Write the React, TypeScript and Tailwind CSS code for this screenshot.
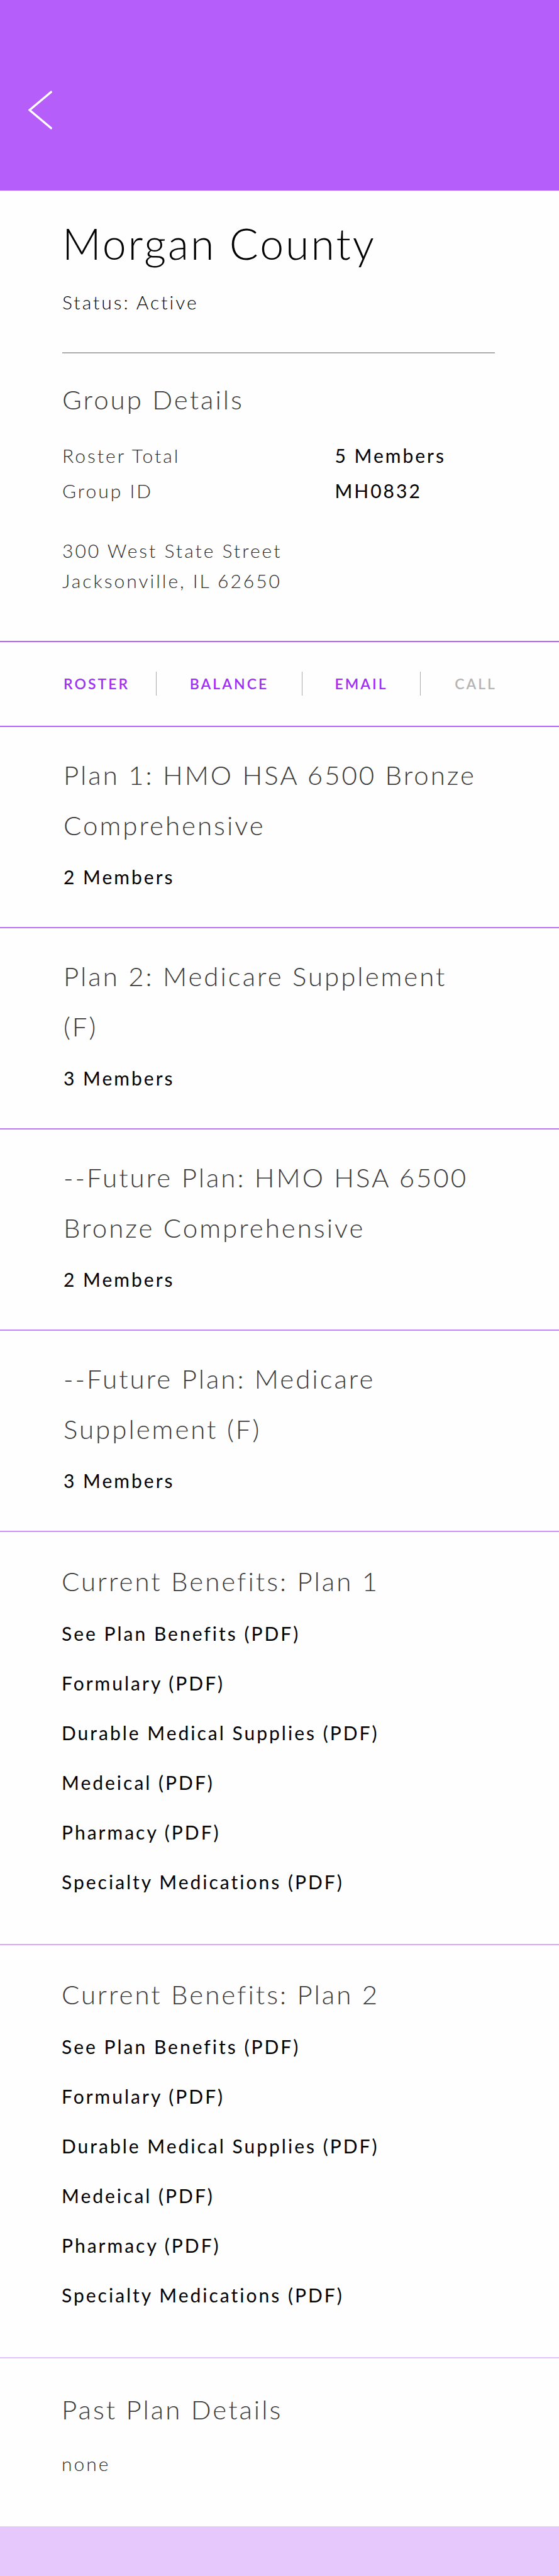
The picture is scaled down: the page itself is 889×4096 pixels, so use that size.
const plans = [
  { name: "Plan 1: HMO HSA 6500 Bronze Comprehensive", members: "2 Members", line: "border-[#bb70fa]" },
  { name: "Plan 2: Medicare Supplement (F)", members: "3 Members", line: "border-[#bd78fa]" },
  { name: "--Future Plan: HMO HSA 6500 Bronze Comprehensive", members: "2 Members", line: "border-[#c384fc]" },
  { name: "--Future Plan: Medicare Supplement (F)", members: "3 Members", line: "border-[#ca90fc]" },
];

const documents = [
  "See Plan Benefits (PDF)",
  "Formulary (PDF)",
  "Durable Medical Supplies (PDF)",
  "Medeical (PDF)",
  "Pharmacy (PDF)",
  "Specialty Medications (PDF)",
];

const benefits = [
  { name: "Current Benefits: Plan 1", line: "border-[#d9a8fd]" },
  { name: "Current Benefits: Plan 2", line: "border-[#e2c0fd]" },
];

const heading = "text-[42px] leading-[80px] font-light text-[#3a3a3a]";

export default function App() {
  return (
    <div className="flex min-h-screen flex-col bg-[#fefefe] font-['Lato',sans-serif] text-[30px] tracking-widest text-black">
      <header className="bg-[#b55efa] pt-[144px] pb-[97px] pl-[45px]">
        <button type="button" aria-label="Back" className="block">
          <svg width="38" height="62" viewBox="0 0 64 104" fill="none" className="block">
            <path d="M63 2 L3.500 52 L63 102" stroke="#fff" strokeWidth="5.500" />
          </svg>
        </button>
      </header>

      <main>
        <section className="border-b-2 border-[#b464fa] pt-[44px] pr-[102px] pb-[72px] pl-[99px]">
          <h1 className="text-[68px] leading-[80px] font-light">Morgan County</h1>
          <p className="mt-[33px] leading-[40px] font-light">Status: Active</p>
          <hr className="mt-[60px] border-t-2 border-[#ababab]" />
          <h2 className={`mt-[33px] ${heading}`}>Group Details</h2>
          <dl className="mt-[21px] grid grid-cols-[63fr_37fr] leading-[56px]">
            <dt className="font-light text-[#2b2b2b]">Roster Total</dt>
            <dd>5 Members</dd>
            <dt className="font-light text-[#2b2b2b]">Group ID</dt>
            <dd>MH0832</dd>
          </dl>
          <address className="mt-[43px] leading-[48px] font-light text-[#2b2b2b] not-italic">
            300 West State Street
            <br />
            Jacksonville, IL 62650
          </address>
        </section>

        <nav className="grid grid-cols-[147fr_232fr_188fr_122fr] border-b-2 border-[#b464fa] pt-[47px] pr-[99px] pb-[48px] pl-[101px] text-[23px] leading-[32px] font-semibold text-[#9f2ff5]">
          <button type="button" className="h-[38px] text-left">ROSTER</button>
          <button type="button" className="h-[38px] border-l border-[#ababab]">BALANCE</button>
          <button type="button" className="h-[38px] border-l border-[#ababab]">EMAIL</button>
          <button type="button" disabled className="h-[38px] border-l border-[#ababab] text-right text-[#b4b4b4]">CALL</button>
        </nav>

        {plans.map((plan) => (
          <section key={plan.name} className={`border-b-2 pt-[36px] pr-[124px] pb-[40px] pl-[101px] ${plan.line}`}>
            <h2 className={heading}>{plan.name}</h2>
            <p className="mt-[2px] leading-[80px]">{plan.members}</p>
          </section>
        ))}

        {benefits.map((group) => (
          <section key={group.name} className={`border-b-2 pt-[38px] pr-[102px] pb-[59px] pl-[98px] ${group.line}`}>
            <h2 className={heading}>{group.name}</h2>
            <ul className="mt-[4px] leading-[79px]">
              {documents.map((title) => (
                <li key={title}>
                  <a href="#">{title}</a>
                </li>
              ))}
            </ul>
          </section>
        ))}

        <section className="pt-[41px] pr-[102px] pb-[60px] pl-[98px]">
          <h2 className={heading}>Past Plan Details</h2>
          <p className="mt-[6px] leading-[80px] font-light text-[#2b2b2b]">none</p>
        </section>
      </main>

      <footer className="min-h-[78px] grow bg-[#e6c8fd]" />
    </div>
  );
}
